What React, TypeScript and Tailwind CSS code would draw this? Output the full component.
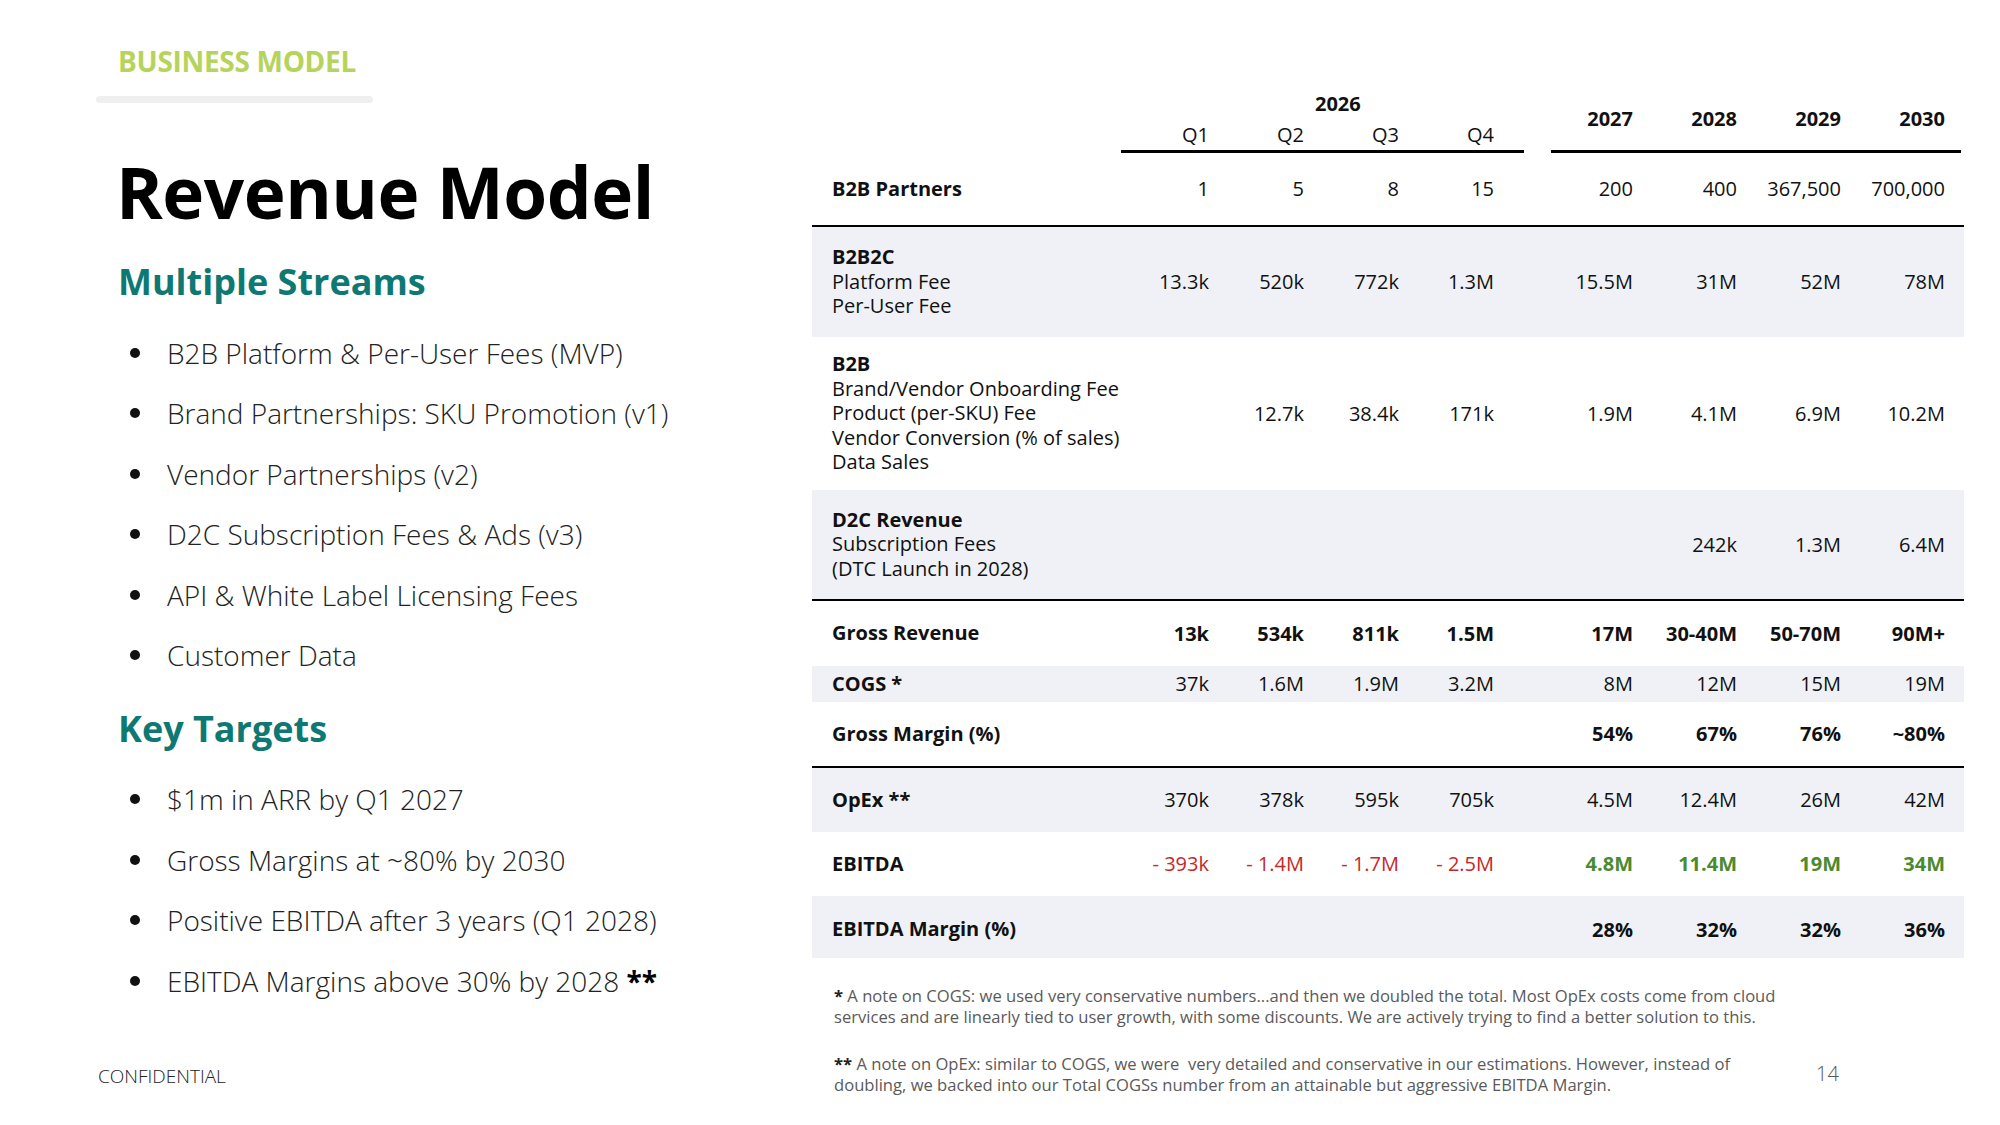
import React from "react";

type Cell = { v: string; cls?: string };

const Q_W = ["w-[95px]", "w-[95px]", "w-[95px]", "w-[95px]"];

function Row({
  label,
  q,
  y,
  h,
  band,
  valueCls = "",
  extra = "",
}: {
  label: React.ReactNode;
  q: (string | Cell)[];
  y: (string | Cell)[];
  h: string;
  band?: boolean;
  valueCls?: string;
  extra?: string;
}) {
  const norm = (c: string | Cell): Cell => (typeof c === "string" ? { v: c } : c);
  return (
    <div className={`flex items-center ${h} ${extra} ${band ? "bg-[#eff1f6]" : ""}`}>
      <div className="w-[302px] pl-[20px] font-bold leading-[24.5px]">{label}</div>
      {q.map((c, i) => {
        const n = norm(c);
        return (
          <div key={"q" + i} className={`${Q_W[i]} text-right ${valueCls} ${n.cls ?? ""}`}>
            {n.v}
          </div>
        );
      })}
      <div className="w-[35px]" />
      {y.map((c, i) => {
        const n = norm(c);
        return (
          <div key={"y" + i} className={`w-[104px] text-right ${valueCls} ${n.cls ?? ""}`}>
            {n.v}
          </div>
        );
      })}
    </div>
  );
}

function Line() {
  return <div className="h-[2px] bg-black" />;
}

function Bullet({ children }: { children: React.ReactNode }) {
  return (
    <div className="flex items-center h-[60.5px]">
      <div className="ml-[34px] w-[10px] h-[10px] rounded-full bg-[#111]" />
      <div className="ml-[27px] text-[28px] font-light text-[#222] whitespace-nowrap">{children}</div>
    </div>
  );
}

const red = "text-[#c62828]";
const green = "text-[#4b8a2e] font-bold";

export default function App() {
  return (
    <div
      className="w-[2000px] h-[1125px] bg-white overflow-hidden flex text-black"
      style={{ fontFamily: '"Open Sans", "Noto Sans", sans-serif' }}
    >
      {/* Left column */}
      <div className="w-[812px] pl-[96px] pt-[43px] flex flex-col">
        <div className="ml-[22px] h-[36px] leading-[36px] text-[28px] font-bold text-[#b6d35b] tracking-[-0.3px]">
          BUSINESS MODEL
        </div>
        <div className="mt-[16.5px] w-[277px] h-[7px] rounded-full bg-[#efefef]" />
        <div className="mt-[54.5px] ml-[20px] h-[70px] leading-[70px] text-[71px] font-bold text-black tracking-[-0.5px]">
          Revenue Model
        </div>
        <div className="mt-[32.5px] ml-[22px] h-[43px] leading-[43px] text-[36px] font-bold text-[#0e7872]">
          Multiple Streams
        </div>
        <div className="mt-[20.2px] flex flex-col">
          <Bullet>B2B Platform &amp; Per-User Fees (MVP)</Bullet>
          <Bullet>Brand Partnerships: SKU Promotion (v1)</Bullet>
          <Bullet>Vendor Partnerships (v2)</Bullet>
          <Bullet>D2C Subscription Fees &amp; Ads (v3)</Bullet>
          <Bullet>API &amp; White Label Licensing Fees</Bullet>
          <Bullet>Customer Data</Bullet>
        </div>
        <div className="mt-[21.2px] ml-[22px] h-[43px] leading-[43px] text-[36px] font-bold text-[#0e7872]">
          Key Targets
        </div>
        <div className="mt-[19px] flex flex-col">
          <Bullet>$1m in ARR by Q1 2027</Bullet>
          <Bullet>Gross Margins at ~80% by 2030</Bullet>
          <Bullet>Positive EBITDA after 3 years (Q1 2028)</Bullet>
          <Bullet>
            EBITDA Margins above 30% by 2028 <span className="font-bold text-black">**</span>
          </Bullet>
        </div>
        <div className="mt-[52px] ml-[2px] h-[26px] leading-[26px] text-[19px] font-light text-[#222]">
          CONFIDENTIAL
        </div>
      </div>

      {/* Right column: table */}
      <div className="w-[1152px] pt-[89px] flex flex-col text-[20px] text-[#111]">
        {/* Header */}
        <div className="flex items-end">
          <div className="w-[309px]" />
          <div className="w-[403px] border-b-[3px] border-black">
            <div className="h-[30px] leading-[30px] pl-[194px] font-bold">2026</div>
            <div className="flex h-[31px] leading-[31px]">
              <div className="w-[88px] text-right">Q1</div>
              <div className="w-[95px] text-right">Q2</div>
              <div className="w-[95px] text-right">Q3</div>
              <div className="w-[95px] text-right">Q4</div>
            </div>
          </div>
          <div className="w-[27px]" />
          <div className="w-[410px] border-b-[3px] border-black pb-[17px]">
            <div className="flex h-[28px] leading-[28px] font-bold">
              <div className="w-[82px] text-right">2027</div>
              <div className="w-[104px] text-right">2028</div>
              <div className="w-[104px] text-right">2029</div>
              <div className="w-[104px] text-right">2030</div>
            </div>
          </div>
        </div>

        <Row
          h="h-[72px]"
          label="B2B Partners"
          q={["1", "5", "8", "15"]}
          y={["200", "400", "367,500", "700,000"]}
        />
        <Line />
        <Row
          h="h-[110px]"
          band
          label={
            <>
              <div>B2B2C</div>
              <div className="font-normal">Platform Fee</div>
              <div className="font-normal">Per-User Fee</div>
            </>
          }
          q={["13.3k", "520k", "772k", "1.3M"]}
          y={["15.5M", "31M", "52M", "78M"]}
        />
        <Row
          h="h-[153px]"
          label={
            <>
              <div>B2B</div>
              <div className="font-normal whitespace-nowrap">Brand/Vendor Onboarding Fee</div>
              <div className="font-normal whitespace-nowrap">Product (per-SKU) Fee</div>
              <div className="font-normal whitespace-nowrap">Vendor Conversion (% of sales)</div>
              <div className="font-normal whitespace-nowrap">Data Sales</div>
            </>
          }
          q={["", "12.7k", "38.4k", "171k"]}
          y={["1.9M", "4.1M", "6.9M", "10.2M"]}
        />
        <Row
          h="h-[109px]"
          band
          label={
            <>
              <div>D2C Revenue</div>
              <div className="font-normal whitespace-nowrap">Subscription Fees</div>
              <div className="font-normal whitespace-nowrap">(DTC Launch in 2028)</div>
            </>
          }
          q={["", "", "", ""]}
          y={["", "242k", "1.3M", "6.4M"]}
        />
        <Line />
        <Row
          h="h-[65px]"
          label="Gross Revenue"
          valueCls="font-bold"
          q={["13k", "534k", "811k", "1.5M"]}
          y={["17M", "30-40M", "50-70M", "90M+"]}
        />
        <Row
          h="h-[36px]"
          band
          label="COGS *"
          q={["37k", "1.6M", "1.9M", "3.2M"]}
          y={["8M", "12M", "15M", "19M"]}
        />
        <Row
          h="h-[64px]"
          label="Gross Margin (%)"
          valueCls="font-bold"
          q={["", "", "", ""]}
          y={["54%", "67%", "76%", "~80%"]}
        />
        <Line />
        <Row
          h="h-[64px]"
          band
          label="OpEx **"
          q={["370k", "378k", "595k", "705k"]}
          y={["4.5M", "12.4M", "26M", "42M"]}
        />
        <Row
          h="h-[64px]"
          label="EBITDA"
          q={[
            { v: "- 393k", cls: red },
            { v: "- 1.4M", cls: red },
            { v: "- 1.7M", cls: red },
            { v: "- 2.5M", cls: red },
          ]}
          y={[
            { v: "4.8M", cls: green },
            { v: "11.4M", cls: green },
            { v: "19M", cls: green },
            { v: "34M", cls: green },
          ]}
        />
        <Row
          h="h-[62px]"
          extra="pt-[5px]"
          band
          label="EBITDA Margin (%)"
          valueCls="font-bold"
          q={["", "", "", ""]}
          y={["28%", "32%", "32%", "36%"]}
        />

        {/* Footnotes */}
        <div className="mt-[27px] pl-[22px] text-[16.6px] leading-[21px] text-[#5a5a5a] whitespace-nowrap">
          <span className="font-bold text-[#222]">*</span> A note on COGS: we used very conservative
          numbers...and then we doubled the total. Most OpEx costs come from cloud
          <br />
          services and are linearly tied to user growth, with some discounts. We are actively trying to
          find a better solution to this.
        </div>
        <div className="mt-[26px] pl-[22px] flex items-center">
          <div className="w-[982px] text-[16.6px] leading-[21px] text-[#5a5a5a] whitespace-nowrap">
            <span className="font-bold text-[#222]">**</span> A note on OpEx: similar to COGS, we
            were&nbsp; very detailed and conservative in our estimations. However, instead of
            <br />
            doubling, we backed into our Total COGSs number from an attainable but aggressive EBITDA
            Margin.
          </div>
          <div className="text-[20px] font-light text-[#555]">14</div>
        </div>
      </div>
    </div>
  );
}
